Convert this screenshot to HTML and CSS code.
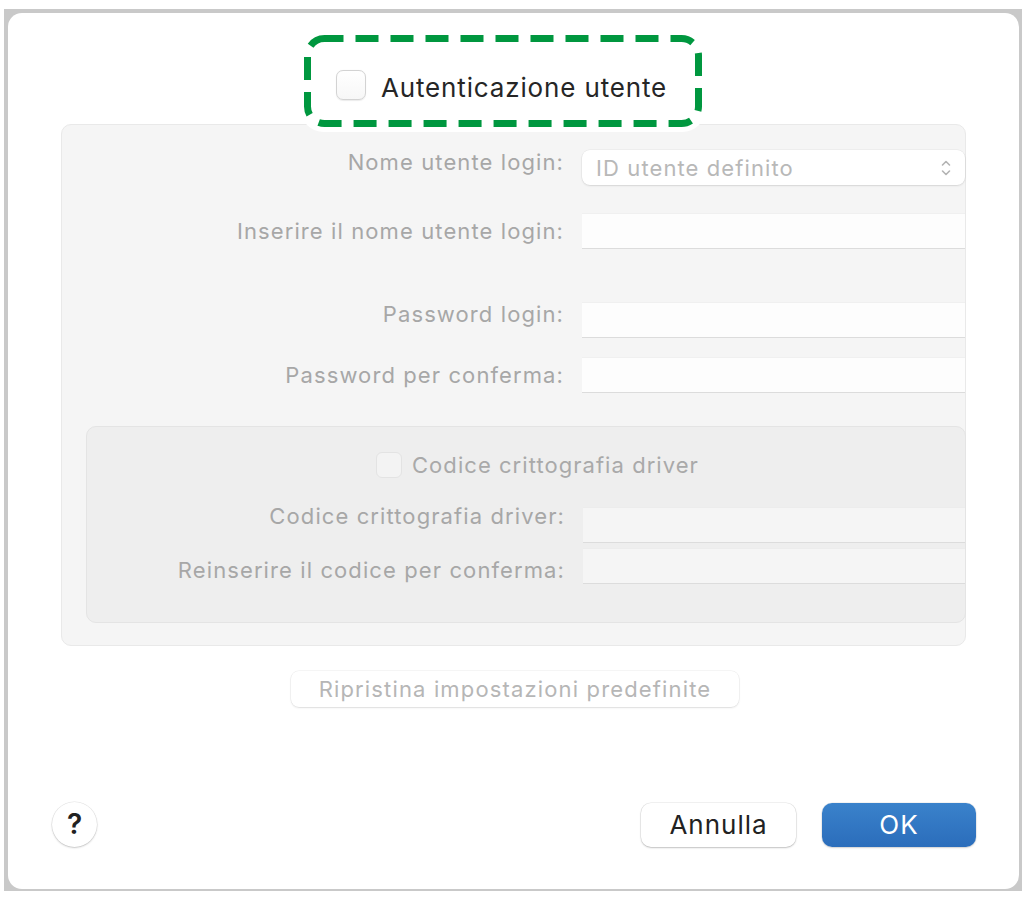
FILE: index.html
```html
<!DOCTYPE html>
<html lang="it">
<head>
<meta charset="utf-8">
<title>Autenticazione utente</title>
<link rel="stylesheet" href="styles.css">
</head>
<body>
<div class="frame">
  <div class="sheet">
    <div class="callout">
      <svg class="callout-svg" width="406" height="101" viewBox="0 0 406 101">
        <rect x="7.5" y="7.5" width="391" height="85" rx="17" ry="17" fill="none" stroke="#00973f" stroke-width="7" stroke-dasharray="23 12" stroke-dashoffset="4"/>
      </svg>
    </div>
    <div class="title-row">
      <span class="check check-lg"></span>
      <span class="title">Autenticazione utente</span>
    </div>

    <div class="panel">
      <div class="row row-1">
        <span class="lbl lbl-top">Nome utente login:</span>
        <div class="popup">
          <span class="popup-text">ID utente definito</span>
          <svg class="chev" width="10" height="18" viewBox="0 0 10 18">
            <path d="M1.5 6 L5 2.5 L8.5 6" fill="none" stroke="#b3b3b3" stroke-width="1.6" stroke-linecap="round" stroke-linejoin="round"/>
            <path d="M1.5 12 L5 15.5 L8.5 12" fill="none" stroke="#b3b3b3" stroke-width="1.6" stroke-linecap="round" stroke-linejoin="round"/>
          </svg>
        </div>
      </div>
      <div class="row row-2">
        <span class="lbl">Inserire il nome utente login:</span>
        <div class="field"></div>
      </div>
      <div class="row row-3">
        <span class="lbl lbl-top">Password login:</span>
        <div class="field"></div>
      </div>
      <div class="row row-4">
        <span class="lbl">Password per conferma:</span>
        <div class="field"></div>
      </div>

      <div class="inner">
        <div class="inner-check">
          <span class="check check-sm"></span>
          <span class="inner-title">Codice crittografia driver</span>
        </div>
        <div class="row irow-1">
          <span class="lbl lbl-up">Codice crittografia driver:</span>
          <div class="field field-in"></div>
        </div>
        <div class="row irow-2">
          <span class="lbl lbl-down">Reinserire il codice per conferma:</span>
          <div class="field field-in"></div>
        </div>
      </div>
    </div>

    <div class="reset-wrap">
      <button class="reset">Ripristina impostazioni predefinite</button>
    </div>

    <div class="footer">
      <button class="help">?</button>
      <div class="actions">
        <button class="btn">Annulla</button>
        <button class="btn btn-ok">OK</button>
      </div>
    </div>
  </div>
</div>
</body>
</html>
```

FILE: styles.css
```css
html, body {
  margin: 0;
  padding: 0;
  background: #ffffff;
}

body {
  font-family: Inter, "Noto Sans", "Liberation Sans", sans-serif;
  width: 1028px;
  height: 900px;
  overflow: hidden;
}

.frame {
  margin: 9px 0 0 4px;
  width: 1018px;
  height: 882px;
  background: #c9c9c9;
  padding: 4px 3px 2px 4px;
  box-sizing: border-box;
}

.sheet {
  position: relative;
  width: 1011px;
  height: 876px;
  background: #ffffff;
  border-radius: 14px;
  box-sizing: border-box;
  padding: 57px 53px 0 53px;
}

.callout {
  position: absolute;
  left: 292px;
  top: 18px;
  width: 406px;
  height: 101px;
  background: #ffffff;
  border-radius: 24px;
  z-index: 1;
}

.callout-svg {
  display: block;
}

.title-row {
  position: relative;
  z-index: 2;
  display: flex;
  align-items: center;
  height: 30px;
  padding-left: 275px;
  gap: 15px;
}

.check {
  display: block;
  box-sizing: border-box;
  flex: none;
}

.check-lg {
  width: 30px;
  height: 30px;
  border-radius: 7px;
  border: 1px solid #d3d3d3;
  background: linear-gradient(#ffffff, #f7f7f7);
  box-shadow: 0 0.5px 1px rgba(0, 0, 0, 0.08);
}

.title {
  font-size: 26px;
  color: #262626;
  letter-spacing: 0.85px;
  line-height: 30px;
  padding-top: 5px;
}

.panel {
  margin-top: 24px;
  width: 905px;
  height: 522px;
  box-sizing: border-box;
  background: #f5f5f5;
  border: 1px solid #e9e9e9;
  border-radius: 10px;
  padding-top: 25px;
}

.row {
  display: flex;
  align-items: center;
  gap: 19px;
}

.row-2 { margin-top: 28px; }
.row-3 { margin-top: 53px; }
.row-4 { margin-top: 19px; }

.lbl {
  flex: 1;
  text-align: right;
  font-size: 22px;
  letter-spacing: 1.1px;
  margin-right: -1px;
  color: #a7a7a7;
  white-space: nowrap;
}

.lbl-top {
  align-self: flex-start;
  line-height: 24px;
}

.lbl-up {
  align-self: flex-start;
  line-height: 18px;
}

.lbl-down {
  padding-top: 7px;
}

.popup {
  width: 383px;
  height: 35px;
  box-sizing: border-box;
  background: #ffffff;
  border-radius: 8px;
  box-shadow: 0 0 0 0.5px rgba(0, 0, 0, 0.06), 0 1px 2px rgba(0, 0, 0, 0.1);
  display: flex;
  align-items: center;
  justify-content: space-between;
  padding: 0 14px 0 14px;
}

.popup-text {
  font-size: 22px;
  letter-spacing: 1.1px;
  color: #b8b8b8;
}

.chev {
  display: block;
}

.field {
  width: 383px;
  height: 36px;
  box-sizing: border-box;
  background: #fdfdfd;
  border-bottom: 1.5px solid #dcdcdc;
  border-top: 1px solid #f0f0f0;
}

.inner {
  margin: 33px -1px 0 24px;
  height: 197px;
  box-sizing: border-box;
  background: #eeeeee;
  border: 1px solid #e4e4e4;
  border-radius: 10px;
  padding-top: 25px;
}

.inner-check {
  display: flex;
  align-items: center;
  gap: 10px;
  padding-left: 289px;
  height: 26px;
}

.check-sm {
  width: 26px;
  height: 26px;
  border-radius: 6px;
  border: 1px solid #e3e3e3;
  background: #f3f3f3;
}

.inner-title {
  font-size: 22px;
  letter-spacing: 1.05px;
  color: #a9a9a9;
}

.irow-1 { margin-top: 29px; }
.irow-2 { margin-top: 5px; }

.field-in {
  width: 382px;
  background: #f5f5f5;
  border-top: 1px solid #ececec;
}

.reset-wrap {
  display: flex;
  justify-content: center;
  margin-top: 25px;
  padding-left: 3px;
}

.reset {
  font-family: inherit;
  width: 448px;
  height: 36px;
  background: #ffffff;
  border: none;
  border-radius: 8px;
  box-shadow: 0 0 0 0.5px rgba(0, 0, 0, 0.07), 0 1px 2px rgba(0, 0, 0, 0.1);
  font-size: 22px;
  letter-spacing: 1.15px;
  color: #b6b6b6;
  padding: 0;
}

.footer {
  display: flex;
  align-items: center;
  justify-content: space-between;
  margin-top: 95px;
  margin-left: -9px;
  margin-right: -10px;
  height: 45px;
}

.help {
  font-family: inherit;
  width: 45px;
  height: 45px;
  border-radius: 50%;
  border: none;
  background: #ffffff;
  box-shadow: 0 0 0 0.5px rgba(0, 0, 0, 0.1), 0 1px 2px rgba(0, 0, 0, 0.18);
  font-size: 28px;
  font-weight: 600;
  color: #222222;
  padding: 0;
  line-height: 45px;
}

.actions {
  display: flex;
  gap: 26px;
}

.btn {
  font-family: inherit;
  width: 155px;
  height: 44px;
  border: none;
  border-radius: 10px;
  background: #ffffff;
  box-shadow: 0 0 0 0.5px rgba(0, 0, 0, 0.1), 0 1px 2px rgba(0, 0, 0, 0.2);
  font-size: 26px;
  letter-spacing: 1px;
  color: #222222;
  padding: 0;
}

.btn-ok {
  width: 154px;
  background: linear-gradient(#3a82cb, #2b6dbb);
  color: #ffffff;
  box-shadow: 0 0 0 0.5px rgba(0, 0, 0, 0.08), 0 1px 2px rgba(0, 0, 0, 0.15);
}
```
